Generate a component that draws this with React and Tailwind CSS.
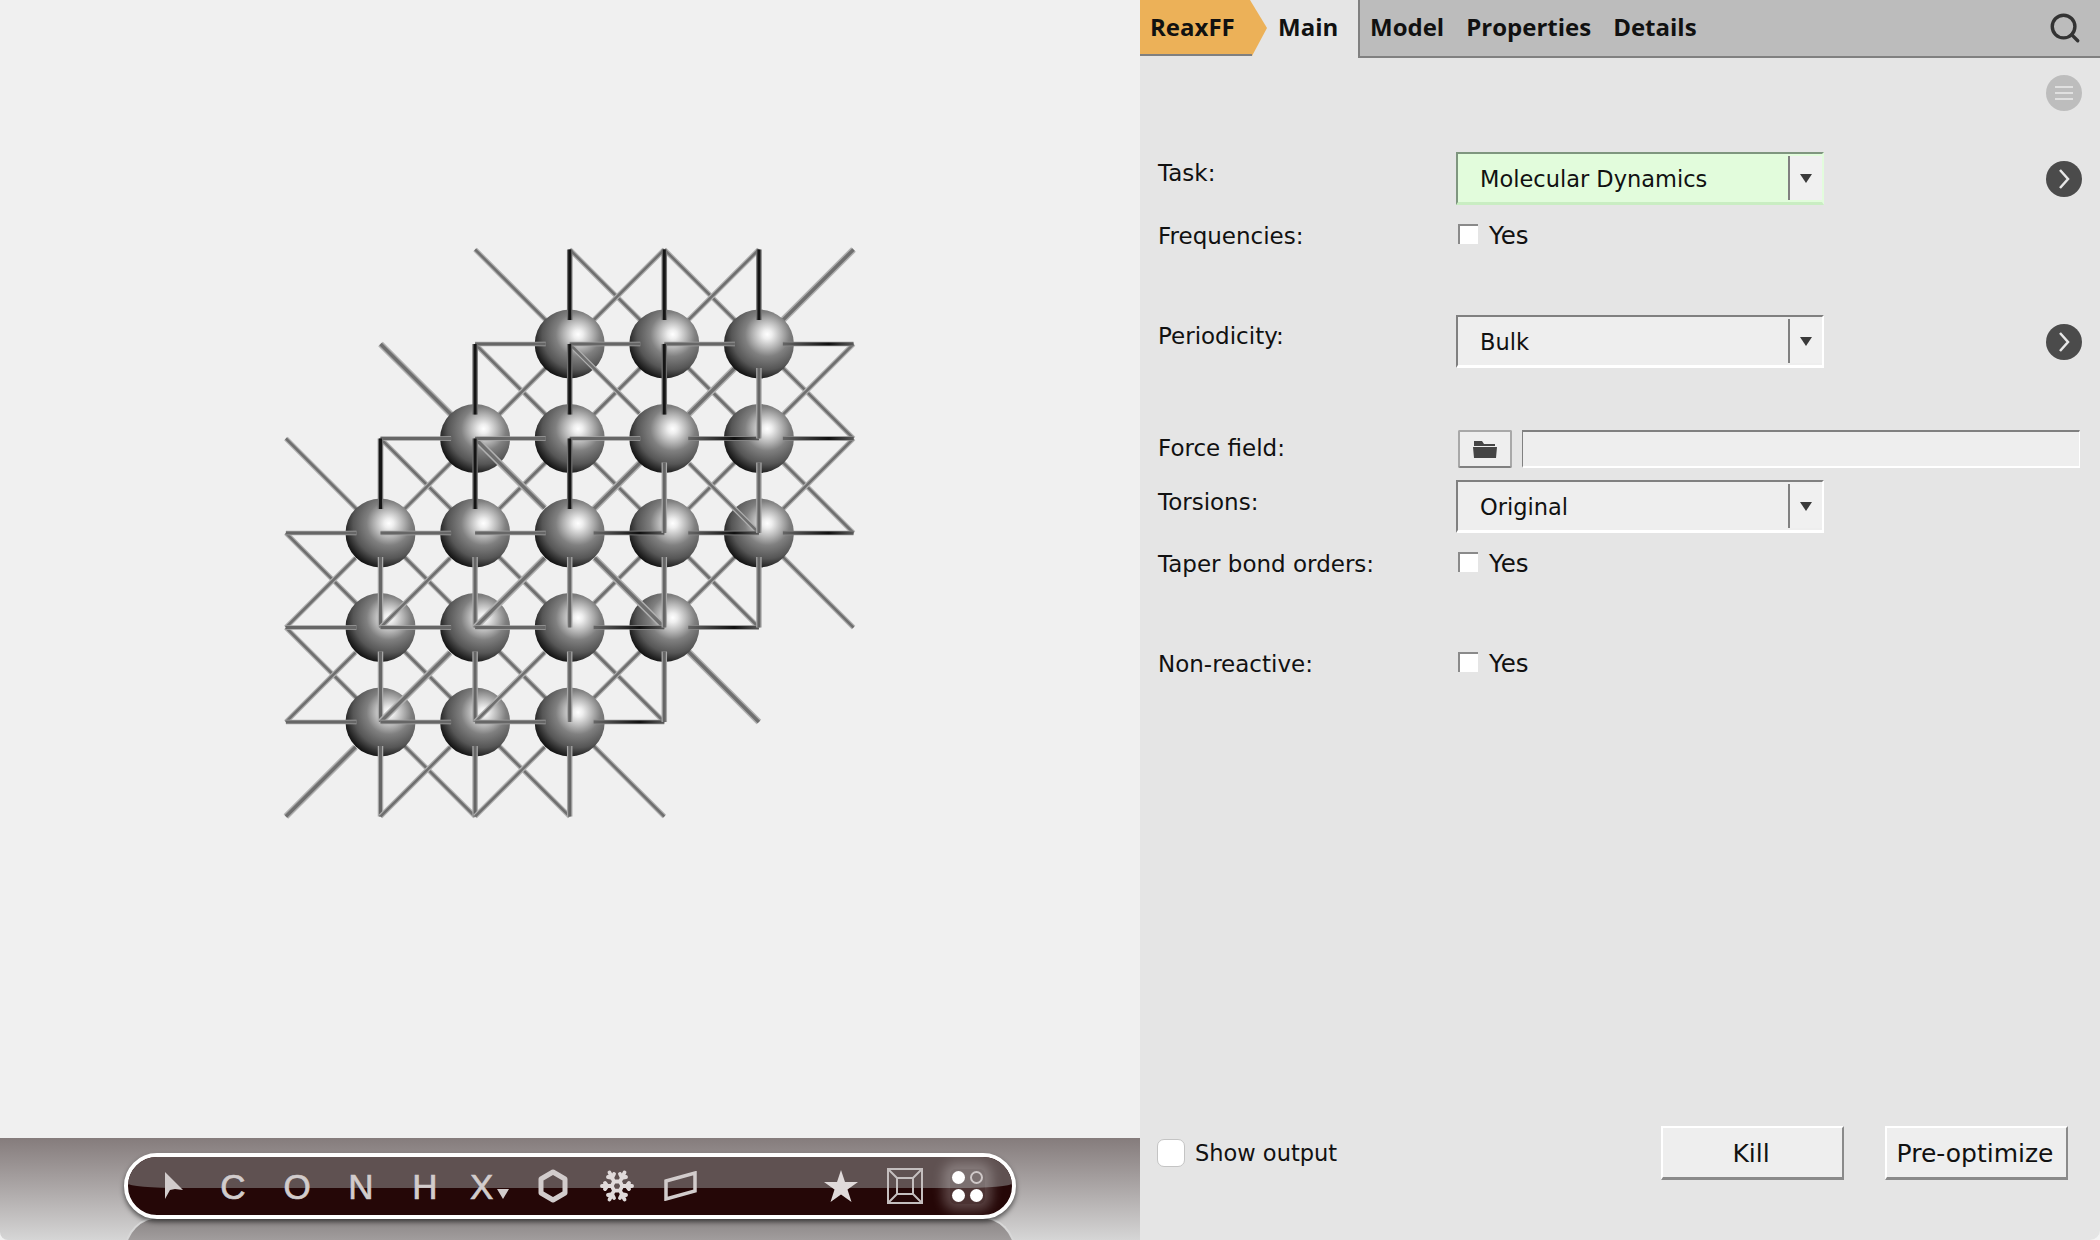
import { Search, Snowflake } from 'lucide-react';

const atoms = [
    [2, 0], [3, 0], [4, 0],
    [1, 1], [2, 1], [3, 1], [4, 1],
    [0, 2], [1, 2], [2, 2], [3, 2], [4, 2],
    [0, 3], [1, 3], [2, 3], [3, 3],
    [0, 4], [1, 4], [2, 4],
];
const hasAtom = (c, r) => atoms.some(a => a[0] === c && a[1] === r);
const px = c => 380.5 + 94.6 * c;
const py = r => 344 + 94.5 * r;
const diagInset = 25;

// every link of the lattice touches at least one atom
const linked = (c1, r1, c2, r2) => hasAtom(c1, r1) || hasAtom(c2, r2);

const Bond = ({ id, x1, y1, x2, y2, outer, core, w = 5, cw = 2.5 }) => (
    <g strokeLinecap="butt">
        {id && (
            <linearGradient id={id} gradientUnits="userSpaceOnUse" x1={x1} y1={y1} x2={x2} y2={y2}>
                <stop offset="0" stopColor="#666666" />
                <stop offset="0.65" stopColor="#0f0f0f" />
                <stop offset="1" stopColor="#5a5a5a" />
            </linearGradient>
        )}
        <line x1={x1} y1={y1} x2={x2} y2={y2} stroke={outer} strokeWidth={w} />
        <line x1={x1} y1={y1} x2={x2} y2={y2} stroke={id ? `url(#${id})` : core} strokeWidth={cw} />
    </g>
);

const Lattice = () => {
    const under = [];
    const over = [];
    for (let c = -1; c <= 5; c++) {
        for (let r = -1; r <= 5; r++) {
            // down-right diagonal
            if (linked(c, r, c + 1, r + 1)) {
                const thick = c === r;
                const fromCenter = (c === 1 && r === 1) || (c === 2 && r === 0);
                const toCenter = (c === 2 && r === 2) || (c === 3 && r === 1);
                const props = { x1: px(c), y1: py(r), x2: px(c + 1), y2: py(r + 1), outer: '#b0b0b0', core: '#6f6f6f', w: thick ? 6.5 : 5, cw: thick ? 3.5 : 2.5 };
                if (fromCenter) over.push(<Bond key={`dr${c}${r}`} {...props} x2={px(c + 1) - diagInset} y2={py(r + 1) - diagInset} />);
                else if (toCenter) over.push(<Bond key={`dr${c}${r}`} {...props} x1={px(c) + diagInset} y1={py(r) + diagInset} />);
                else under.push(<Bond key={`dr${c}${r}`} {...props} />);
            }
            // up-right diagonal
            if (linked(c, r, c + 1, r - 1)) {
                const thick = c + r === 4;
                const fromCenter = c <= 1 && r >= 3;
                const props = { x1: px(c), y1: py(r), x2: px(c + 1), y2: py(r - 1), outer: '#b0b0b0', core: '#6f6f6f', w: thick ? 6.5 : 5, cw: thick ? 3.5 : 2.5 };
                if (fromCenter) over.push(<Bond key={`ur${c}${r}`} {...props} x2={px(c + 1) - diagInset} y2={py(r - 1) + diagInset} />);
                else under.push(<Bond key={`ur${c}${r}`} {...props} />);
            }
            // horizontal
            if (linked(c, r, c + 1, r)) {
                const left = c < 2 || c + r <= 3;
                over.push(
                    <Bond key={`h${c}${r}`} id={left ? undefined : `hf${c + 1}${r + 1}`} x1={left ? px(c) : px(c) + 24} x2={left ? px(c + 1) - 24 : px(c + 1)} y1={py(r)} y2={py(r)}
                        outer={left ? '#a4a4a4' : '#8a8a8a'} core="#666666" w={4.5} cw={3} />
                );
            }
            // vertical
            if (linked(c, r, c, r + 1)) {
                const top = r < 2 && c + r <= 3;
                over.push(
                    <Bond key={`v${c}${r}`} x1={px(c)} x2={px(c)} y1={top ? py(r) : py(r) + 24} y2={top ? py(r + 1) - 24 : py(r + 1)}
                        outer={top ? '#707070' : '#a8a8a8'} core={top ? '#151515' : '#666666'} w={5.5} cw={3} />
                );
            }
        }
    }
    return (
        <svg viewBox="0 0 1140 1138" className="w-[1140px] h-[1138px] block">
            <defs>
                <radialGradient id="atom" cx="0.62" cy="0.36" r="0.68">
                    <stop offset="0" stopColor="#ffffff" />
                    <stop offset="0.1" stopColor="#eeeeee" />
                    <stop offset="0.3" stopColor="#b4b4b4" />
                    <stop offset="0.47" stopColor="#808080" />
                    <stop offset="0.75" stopColor="#565656" />
                    <stop offset="0.92" stopColor="#262626" />
                    <stop offset="1" stopColor="#111111" />
                </radialGradient>
            </defs>
            {under}
            {atoms.map(([c, r]) => (
                <ellipse key={`${c}-${r}`} cx={px(c)} cy={py(r)} rx="35" ry="34.5" fill="url(#atom)" />
            ))}
            {over}
        </svg>
    );
};

const ToolLetter = ({ children }) => (
    <div className="w-[64px] flex justify-center text-[#d2cccc] text-[35px] leading-none [-webkit-text-stroke:0.7px_#d2cccc] [font-family:'Liberation_Sans',sans-serif]">{children}</div>
);

const Toolbar = () => (
    <div className="relative h-[102px] shrink-0 overflow-hidden rounded-bl-[8px] bg-gradient-to-b from-[#857c7c] to-[#d6d6d6]">
        <div className="absolute left-[124px] top-[78px] w-[892px] h-[50px] rounded-t-[36px] border-t-2 border-x-2 border-[#d8d8d8] bg-gradient-to-b from-[#8a8585] to-[#bdbaba]"></div>
        <div className="relative ml-[124px] mt-[15px] w-[892px] h-[66px] rounded-full border-[4px] border-white bg-[#250707] shadow-[0_3px_5px_rgba(0,0,0,0.55)] overflow-hidden">
            <div className="absolute inset-x-0 top-0 h-[31px] bg-[#5f5151] [border-radius:30px_30px_60px_60px/30px_30px_5px_5px]"></div>
            <div className="relative flex items-center h-full pl-[12px]">
                <div className="w-[61px] flex justify-center pl-[6px]">
                    <svg width="20" height="28" viewBox="0 0 20 28" fill="#d2cccc"><path d="M1 0 L19 18 L11 17 L6 18 L1 27 Z" /></svg>
                </div>
                <ToolLetter>C</ToolLetter>
                <ToolLetter>O</ToolLetter>
                <ToolLetter>N</ToolLetter>
                <ToolLetter>H</ToolLetter>
                <div className="w-[64px] flex items-center justify-start pl-[13px] text-[#d2cccc] text-[35px] leading-none [-webkit-text-stroke:0.7px_#d2cccc] [font-family:'Liberation_Sans',sans-serif]">
                    X
                    <svg width="12" height="12" viewBox="0 0 12 12" className="mt-[16px] ml-[4px]" fill="#d2cccc"><path d="M0 1 H12 L6 11 Z" /></svg>
                </div>
                <div className="w-[64px] flex justify-center">
                    <svg width="30" height="34" viewBox="0 0 30 34" fill="none" stroke="#d2cccc" strokeWidth="5"><path d="M15 3 L27 10 V24 L15 31 L3 24 V10 Z" strokeLinejoin="round" /></svg>
                </div>
                <div className="w-[64px] flex justify-center">
                    <Snowflake size={36} color="#e0dada" strokeWidth={2.6} />
                </div>
                <div className="w-[64px] flex justify-center">
                    <svg width="34" height="30" viewBox="0 0 34 30" fill="none" stroke="#d2cccc" strokeWidth="3.5"><path d="M2 10 L31 2 V20 L2 28 Z" /></svg>
                </div>
                <div className="ml-[96px] w-[64px] flex justify-center">
                    <svg width="34" height="32" viewBox="0 0 34 32" fill="#e0dada"><path d="M17 0 L21 12 L34 12 L23.500 19.500 L27.500 32 L17 24.500 L6.500 32 L10.500 19.500 L0 12 L13 12 Z" /></svg>
                </div>
                <div className="w-[64px] flex justify-center">
                    <svg width="36" height="36" viewBox="0 0 36 36" fill="none" stroke="#c4bebe" strokeWidth="2"><rect x="1" y="1" width="34" height="34" /><rect x="10" y="10" width="16" height="16" /><path d="M1 1 L10 10 M35 1 L26 10 M1 35 L10 26 M35 35 L26 26" /></svg>
                </div>
                <div className="w-[64px] flex justify-center pr-[3px]">
                    <div className="grid grid-cols-2 gap-[5px] p-[2px] rounded-md shadow-[0_0_12px_7px_rgba(255,255,255,0.25)] bg-[rgba(255,255,255,0.18)]">
                        <span className="w-[13px] h-[13px] rounded-full bg-white"></span>
                        <span className="w-[13px] h-[13px] rounded-full border-2 border-[#cfc8c8]"></span>
                        <span className="w-[13px] h-[13px] rounded-full bg-white"></span>
                        <span className="w-[13px] h-[13px] rounded-full bg-white"></span>
                    </div>
                </div>
            </div>
        </div>
    </div>
);

const Dropdown = ({ value, green }) => (
    <div className={`w-[368px] h-[53px] flex border-t-2 border-l-2 border-b-[3px] border-r-[2px] text-[22.5px] ${green ? 'bg-[#e2fcdc] border-t-[#7f967f] border-l-[#7f967f] border-b-[#c9edc2] border-r-[#e2fcdc]' : 'bg-[#eeeeee] border-t-[#808080] border-l-[#808080] border-b-white border-r-white'}`}>
        <div className="flex-1 flex items-center pl-[22px] pt-[4px]">{value}</div>
        <div className="w-[34px] my-[2px] flex items-center justify-center bg-[#f0f0f0] border-l-2 border-[#808080]">
            <span className="w-0 h-0 border-x-[6px] border-x-transparent border-t-[9px] border-t-[#3a3a3a]"></span>
        </div>
    </div>
);

const Check = () => (
    <span className="w-[20px] h-[20px] bg-white border-t-2 border-l-2 border-[#8a8a8a]"></span>
);

const YesRow = ({ label, className }) => (
    <div className={`flex items-center h-[20px] ${className}`}>
        <div className="w-[300px] pt-[4px] text-[23px]">{label}</div>
        <Check />
        <span className="ml-[11px] pt-[4px] text-[24.5px]">Yes</span>
    </div>
);

const Chevron = () => (
    <span className="w-[36px] h-[36px] rounded-full bg-[#4b4b4b] flex items-center justify-center">
        <svg width="14" height="22" viewBox="0 0 14 22" fill="none" stroke="#e8e8e8" strokeWidth="2.500"><path d="M3 2 L11 11 L3 20" /></svg>
    </span>
);

const Btn = ({ children, className }) => (
    <button className={`w-[183px] h-[54px] pr-[3px] pt-[2px] bg-[#eeeeee] border-t-2 border-l-2 border-white border-b-[3px] border-r-2 border-b-[#8a8a8a] border-r-[#8a8a8a] text-[25px] ${className}`}>{children}</button>
);

const App = () => {
    return (
        <div className="w-[2100px] h-[1240px] flex bg-[#f4f4f4] text-[#111] text-[23px] [font-family:'DejaVu_Sans',sans-serif] overflow-hidden">
            <div className="w-[1140px] flex flex-col bg-[#f0f0f0]">
                <div className="flex-1">
                    <Lattice />
                </div>
                <Toolbar />
            </div>

            <div className="w-[960px] flex flex-col bg-[#e5e5e5] rounded-br-[10px]">
                <div className="flex h-[58px] shrink-0 items-start bg-[#bcbcbc] [font-family:'Open_Sans',sans-serif] font-bold text-[24px] text-[#111] border-b-2 border-[#808080]">
                    <div className="flex h-[58px] w-[220px] bg-[#e5e5e5] border-r-2 border-[#808080]">
                        <div className="relative w-[127px] h-[56px]">
                            <div className="h-full flex items-center pl-[10px] pb-[2px] bg-[#ecb158] [clip-path:polygon(0_0,110px_0,127px_50%,112px_100%,0_100%)]">ReaxFF</div>
                            <div className="absolute left-0 bottom-0 w-[112px] h-[2px] bg-[#808080]"></div>
                        </div>
                        <div className="h-[56px] flex items-center pl-[11px] pb-[2px]">Main</div>
                    </div>
                    <div className="h-[56px] flex items-center pl-[10px] pb-[2px] gap-[22px]">
                        <span>Model</span>
                        <span>Properties</span>
                        <span>Details</span>
                    </div>
                    <div className="h-[56px] ml-auto flex items-center pr-[18px]">
                        <Search size={34} color="#333" strokeWidth={2.4} />
                    </div>
                </div>

                <div className="flex justify-end pr-[18px] mt-[17px]">
                    <span className="w-[36px] h-[36px] rounded-full bg-[#bdbdbd] flex flex-col items-center justify-center gap-[4px]">
                        <i className="w-[18px] h-[2px] bg-[#e0e0e0]"></i>
                        <i className="w-[18px] h-[2px] bg-[#e0e0e0]"></i>
                        <i className="w-[18px] h-[2px] bg-[#e0e0e0]"></i>
                    </span>
                </div>

                <div className="pl-[18px] pr-[18px] flex flex-col">
                    <div className="flex items-center mt-[41px]">
                        <div className="w-[298px] pb-[10px]">Task:</div>
                        <Dropdown value="Molecular Dynamics" green />
                        <div className="ml-auto"><Chevron /></div>
                    </div>
                    <YesRow label="Frequencies:" className="mt-[19px]" />
                    <div className="flex items-center mt-[71px]">
                        <div className="w-[298px] pb-[11px]">Periodicity:</div>
                        <Dropdown value="Bulk" />
                        <div className="ml-auto"><Chevron /></div>
                    </div>
                    <div className="flex items-center mt-[62px]">
                        <div className="w-[300px] pb-[2px]">Force field:</div>
                        <button className="w-[54px] h-[38px] flex items-center justify-center bg-[#eeeeee] border-2 border-[#a8a8a8] border-b-[#808080] rounded-[2px]">
                            <svg width="24" height="20" viewBox="0 0 24 20" fill="#444"><path d="M1 2 H9 L11 5 H22 V7 H1 Z M0 8 H24 L23 19 H1 Z" /></svg>
                        </button>
                        <div className="ml-[10px] w-[558px] h-[38px] bg-[#eeeeee] border-t-2 border-l border-[#808080] border-b-2 border-r border-b-white border-r-white"></div>
                    </div>
                    <div className="flex items-center mt-[12px]">
                        <div className="w-[298px] pb-[9px]">Torsions:</div>
                        <Dropdown value="Original" />
                    </div>
                    <YesRow label="Taper bond orders:" className="mt-[19px]" />
                    <YesRow label="Non-reactive:" className="mt-[80px]" />
                </div>

                <div className="mt-auto mb-[60px] flex items-center pl-[17px] pr-[32px]">
                    <span className="w-[28px] h-[28px] bg-white rounded-[7px] border border-[#c4c4c4]"></span>
                    <span className="ml-[10px] pt-[2px] text-[22.5px]">Show output</span>
                    <Btn className="ml-auto">Kill</Btn>
                    <Btn className="ml-[41px]">Pre-optimize</Btn>
                </div>
            </div>
        </div>
    );
};

export default App;
